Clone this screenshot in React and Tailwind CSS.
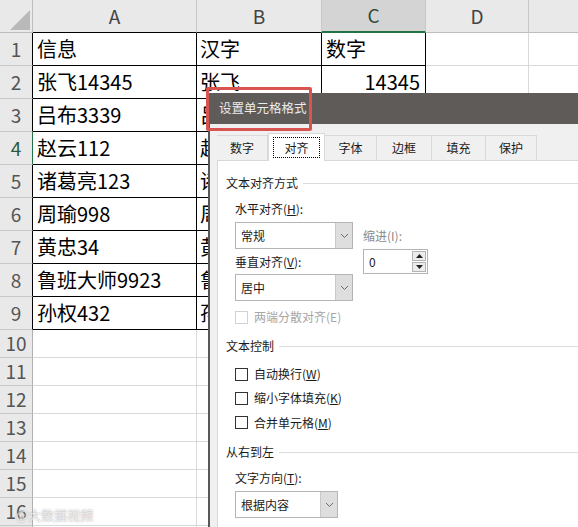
import React from 'react';

const rowsData = [
  ['信息', '汉字', '数字'],
  ['张飞14345', '张飞', '14345'],
  ['吕布3339', '吕布', ''],
  ['赵云112', '赵云', ''],
  ['诸葛亮123', '诸葛亮', ''],
  ['周瑜998', '周瑜', ''],
  ['黄忠34', '黄忠', ''],
  ['鲁班大师9923', '鲁班大师', ''],
  ['孙权432', '孙权', ''],
];

const emptyRows = [10, 11, 12, 13, 14, 15, 16, 17];

function Chevron() {
  return (
    <svg width="9" height="6" viewBox="0 0 9 6">
      <path d="M1 1 L4.5 4.5 L8 1" fill="none" stroke="#6b6b6b" strokeWidth="1" />
    </svg>
  );
}

function Select({ value, width }) {
  return (
    <div className={`flex h-[27px] ${width} border border-[#b4b4b4] bg-white`}>
      <div className="flex flex-1 items-center pl-[5px] text-[12px] text-[#1a1a1a]">{value}</div>
      <div className="flex w-[17px] items-center justify-center border-l border-[#c9c9c9] bg-[#dedede]">
        <Chevron />
      </div>
    </div>
  );
}

function Check({ label, hotkey, tail = ')', disabled }) {
  return (
    <div className="flex items-center gap-[6px]">
      <span
        className={`block h-[13px] w-[13px] border bg-white ${disabled ? 'border-[#d2d2d2]' : 'border-[#333333]'}`}
      ></span>
      <span className={`text-[12px] ${disabled ? 'text-[#a6a6a6]' : 'text-[#1a1a1a]'}`}>
        {label}(<span className={disabled ? '' : 'underline'}>{hotkey}</span>{tail}
      </span>
    </div>
  );
}

function Section({ title }) {
  return (
    <div className="flex h-[24px] items-center">
      <span className="text-[12px] text-[#1a1a1a]">{title}</span>
      <span className="ml-[5px] h-px flex-1 bg-[#dcdcdc]"></span>
    </div>
  );
}

function Sheet() {
  return (
    <div className="grid grid-cols-[33px_164px_125px_104px_103px_1fr]">
      {/* column headers */}
      <div className="relative h-[33px] border-r border-b border-[#bdbdbd] bg-[#e9e9e9]">
        <svg className="absolute left-[10px] top-[10px]" width="20" height="20" viewBox="0 0 20 20">
          <polygon points="20,0 20,20 0,20" fill="#b9b9b9" />
        </svg>
      </div>
      <div className="flex h-[33px] items-center justify-center border-r border-b border-r-[#c8c8c8] border-b-black bg-[#e9e9e9] text-[19px] text-[#444]">A</div>
      <div className="flex h-[33px] items-center justify-center border-r border-b border-r-[#c8c8c8] border-b-black bg-[#e9e9e9] text-[19px] text-[#444]">B</div>
      <div className="flex h-[33px] items-center justify-center border-r border-b-2 border-r-[#c8c8c8] border-b-[#217346] bg-[#d4d4d4] text-[19px] text-[#2d4b3a]">C</div>
      <div className="flex h-[33px] items-center justify-center border-r border-b border-r-[#c8c8c8] border-b-[#bdbdbd] bg-[#e9e9e9] text-[19px] text-[#444]">D</div>
      <div className="h-[33px] border-b border-[#bdbdbd] bg-[#e9e9e9]"></div>

      {rowsData.map((r, i) => (
        <React.Fragment key={i}>
          <div
            className={`flex h-[33px] items-center justify-center border-r border-b border-b-[#c8c8c8] bg-[#e9e9e9] text-[19px] ${
              i === 3 ? 'border-r-[#217346] text-[#2d5a40]' : 'border-r-black text-[#555]'
            }`}
          >
            {i + 1}
          </div>
          <div className="flex h-[33px] items-center border-r border-b border-black px-[4px] text-[20px] leading-none text-black">{r[0]}</div>
          <div className="flex h-[33px] items-center border-r border-b border-black px-[3px] text-[20px] leading-none text-black">{r[1]}</div>
          <div
            className={`flex h-[33px] items-center border-r border-b border-black px-[4px] text-[20px] leading-none text-black ${
              i === 1 ? 'justify-end pr-[5px]' : ''
            }`}
          >
            {r[2]}
          </div>
          <div className="h-[33px] border-r border-b border-[#d9d9d9]"></div>
          <div className="h-[33px] border-b border-[#d9d9d9]"></div>
        </React.Fragment>
      ))}

      {emptyRows.map((n) => (
        <React.Fragment key={n}>
          <div className="flex h-[28px] items-center justify-center border-r border-b border-r-[#b0b0b0] border-b-[#c8c8c8] bg-[#e9e9e9] text-[19px] text-[#555]">
            {n}
          </div>
          <div className="h-[28px] border-r border-b border-[#d9d9d9]"></div>
          <div className="h-[28px] border-r border-b border-[#d9d9d9]"></div>
          <div className="h-[28px] border-r border-b border-[#d9d9d9]"></div>
          <div className="h-[28px] border-r border-b border-[#d9d9d9]"></div>
          <div className="h-[28px] border-b border-[#d9d9d9]"></div>
        </React.Fragment>
      ))}
    </div>
  );
}

function Dialog() {
  const tabs = [
    { t: '数字', w: 'w-[51px]' },
    { t: '对齐', w: 'w-[57px]', on: true },
    { t: '字体', w: 'w-[52px]' },
    { t: '边框', w: 'w-[55px]' },
    { t: '填充', w: 'w-[54px]' },
    { t: '保护', w: 'w-[51px]' },
  ];
  return (
    <div className="absolute left-[208px] top-[93px] w-[380px]">
      <div className="flex h-[31px] items-center bg-[#5e5b59] pl-[11px] text-[12.5px] text-[#ececec]">设置单元格格式</div>
      <div className="h-[420px] border-l-2 border-[#5a5757] bg-[#f0f0f0]">
        <div className="ml-[7px] flex h-[36px] items-end">
          {tabs.map((tab) =>
            tab.on ? (
              <div
                key={tab.t}
                className={`relative z-10 -mb-px flex h-[28px] ${tab.w} items-center justify-center border border-b-0 border-[#d9d9d9] bg-white`}
              >
                <span className="flex h-[21px] w-[47px] items-center justify-center border border-dotted border-black text-[12px] text-[#1a1a1a]">
                  {tab.t}
                </span>
              </div>
            ) : (
              <div
                key={tab.t}
                className={`flex h-[25px] ${tab.w} items-center justify-center border border-b-0 border-l-0 border-[#d9d9d9] bg-[#f0f0f0] text-[12px] text-[#1a1a1a]`}
              >
                {tab.t}
              </div>
            )
          )}
        </div>
        <div className="ml-[7px] h-[400px] border-l border-t border-[#d9d9d9] bg-white pl-[8px] pt-[10px]">
          <Section title="文本对齐方式" />
          <div className="mt-[3px] flex gap-[10px] pl-[9px]">
            <div className="flex w-[118px] flex-col">
              <div className="flex h-[22px] items-center text-[12px] text-[#1a1a1a]">
                水平对齐(<span className="underline">H</span>):
              </div>
              <div className="mt-[2px]">
                <Select value="常规" width="w-[118px]" />
              </div>
              <div className="mt-[2px] flex h-[22px] items-center text-[12px] text-[#1a1a1a]">
                垂直对齐(<span className="underline">V</span>):
              </div>
              <div className="mt-[1px]">
                <Select value="居中" width="w-[118px]" />
              </div>
            </div>
            <div className="flex flex-col pt-[27px]">
              <div className="flex h-[22px] items-center text-[12px] text-[#8a8a8a]">缩进(I):</div>
              <div className="mt-[2px] flex h-[25px] w-[65px] items-center border border-[#b4b4b4] bg-white">
                <span className="flex-1 pl-[5px] text-[12px] text-[#1a1a1a]">0</span>
                <div className="mr-[1px] flex flex-col gap-[1px]">
                  <div className="flex h-[10px] w-[14px] items-center justify-center border border-[#b4b4b4] bg-[#ececec]">
                    <svg width="7" height="4" viewBox="0 0 7 4">
                      <polygon points="3.5,0 7,4 0,4" fill="#222" />
                    </svg>
                  </div>
                  <div className="flex h-[10px] w-[14px] items-center justify-center border border-[#b4b4b4] bg-[#ececec]">
                    <svg width="7" height="4" viewBox="0 0 7 4">
                      <polygon points="0,0 7,0 3.5,4" fill="#222" />
                    </svg>
                  </div>
                </div>
              </div>
            </div>
          </div>
          <div className="mt-[5px] flex h-[22px] items-center pl-[9px]">
            <Check label="两端分散对齐" hotkey="E" disabled />
          </div>
          <div className="mt-[6px]">
            <Section title="文本控制" />
          </div>
          <div className="mt-[4px] flex h-[24px] items-center pl-[9px]">
            <Check label="自动换行" hotkey="W" />
          </div>
          <div className="flex h-[24px] items-center pl-[9px]">
            <Check label="缩小字体填充" hotkey="K" />
          </div>
          <div className="flex h-[25px] items-center pl-[9px]">
            <Check label="合并单元格" hotkey="M" />
          </div>
          <div className="mt-[5px]">
            <Section title="从右到左" />
          </div>
          <div className="mt-[3px] flex h-[22px] items-center pl-[9px] text-[12px] text-[#1a1a1a]">
            文字方向(<span className="underline">T</span>):
          </div>
          <div className="mt-[2px] pl-[9px]">
            <Select value="根据内容" width="w-[103px]" />
          </div>
        </div>
      </div>
    </div>
  );
}

export default function App() {
  return (
    <div className="relative h-[527px] w-[578px] overflow-hidden bg-white font-['Noto_Sans_CJK_SC','Noto_Sans',sans-serif]">
      <Sheet />
      <Dialog />
      {/* red highlight round the dialog title */}
      <div className="absolute left-[206px] top-[87px] h-[44px] w-[106px] rounded-[2px] border-[3px] border-[#d9534f]"></div>
      <div className="absolute left-[16px] top-[508px] text-[13px] leading-[14px] text-white/70 [text-shadow:0_0_2px_#9a9a9a]">@大数据视频</div>
    </div>
  );
}
